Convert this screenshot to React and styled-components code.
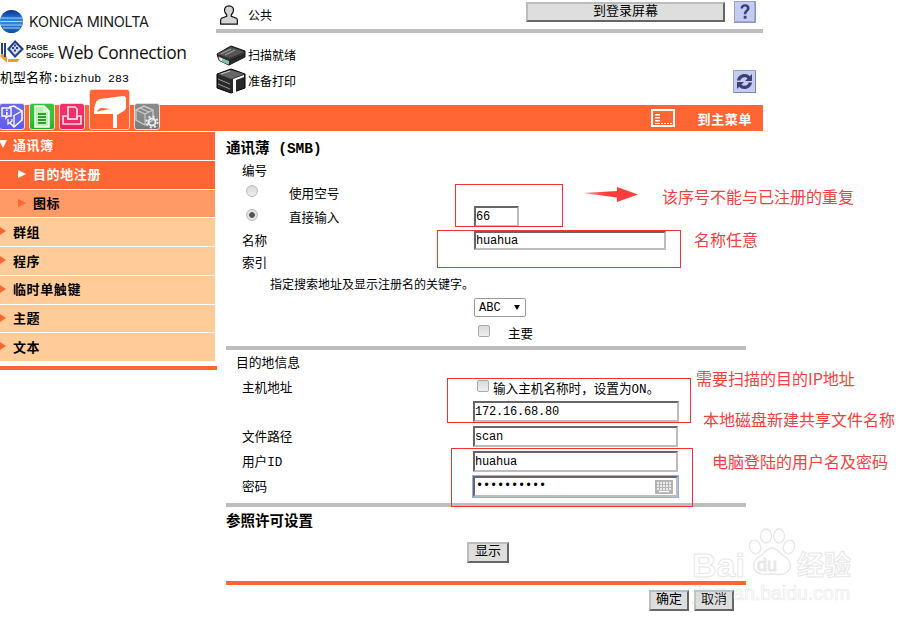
import React from "react";
import styled, { createGlobalStyle, css } from "styled-components";

const FONT = `"Liberation Mono", "Noto Sans CJK SC", monospace`;
const ORANGE = "#ff6633";

const Global = createGlobalStyle`
  html, body { margin: 0; padding: 0; background: #fff; }
  body { font-family: ${FONT}; font-size: 12px; color: #000; }
`;

const Page = styled.div`
  position: relative;
  width: 902px;
  height: 624px;
  overflow: hidden;
  background: #fff;
`;
const Header = styled.header`
  display: flex;
  width: 763px;
  height: 105px;
`;
const Brand = styled.div`
  width: 216px;
  flex: none;
  display: flex;
  flex-direction: column;
`;
const KonicaRow = styled.div`
  display: flex;
  align-items: center;
  height: 32px;
  margin-top: 5px;
  gap: 6px;
`;
const KonicaName = styled.span`
  font: 400 14.4px "Inter", "Liberation Sans", sans-serif;
  letter-spacing: -0.2px;
  color: #1a1a1a;
`;
const ScopeRow = styled.div`
  display: flex;
  align-items: center;
  height: 26px;
  margin-top: 2px;
`;
const ScopeWords = styled.span`
  font: 700 8px/8px "Liberation Sans", sans-serif;
  color: #222;
  width: 28px;
  margin: 0 4px 0 2px;
  flex: none;
`;
const WebConn = styled.span`
  font: 400 17.4px "Open Sans", "Liberation Sans", sans-serif;
  letter-spacing: -0.35px;
  color: #111;
  white-space: nowrap;
`;
const ModelName = styled.div`
  font: 13px/16px ${FONT};
  margin-top: 6px;
`;
const ModelCode = styled.span`
  font-size: 11.5px;
`;
const TopArea = styled.div`
  width: 547px;
  display: flex;
  flex-direction: column;
`;
const UserRow = styled.div`
  display: flex;
  align-items: center;
  height: 29px;
  padding-left: 4px;
  gap: 10px;
  font-size: 12px;
`;
const LoginBtn = styled.div`
  margin-left: auto;
  width: 199px;
  height: 20px;
  box-sizing: border-box;
  margin-top: -5px;
  margin-right: -1px;
  background: #dedede;
  border: 2px solid;
  border-color: #bdbdbd #666 #666 #bdbdbd;
  text-align: center;
  font-size: 13px;
  line-height: 15px;
`;
const HelpBox = styled.div`
  width: 22px;
  height: 22px;
  margin-right: 7px;
  margin-top: -6px;
  flex: none;
`;
const GrayRule = styled.div`
  height: 4px;
  background: #bdbdbd;
`;
const StatusRow = styled.div`
  display: flex;
  align-items: center;
  gap: 2px;
  height: 26px;
  font-size: 12px;
`;
const StatusList = styled.div`
  margin-top: 9px;
`;
const RefreshBox = styled.div`
  position: absolute;
  left: 733px;
  top: 70px;
  width: 23px;
  height: 23px;
`;
const OrangeBar = styled.div`
  position: relative;
  width: 763px;
  height: 26px;
  background: ${ORANGE};
  display: flex;
  align-items: center;
  justify-content: flex-end;
  padding-right: 11px;
  box-sizing: border-box;
  gap: 23px;
  color: #fff;
  font-weight: 700;
  font-size: 13px;
  letter-spacing: 0.6px;
`;
const TabStrip = styled.nav`
  position: absolute;
  left: -1px;
  bottom: 1px;
  display: flex;
  align-items: flex-end;
  gap: 4px;
`;
const Tab = styled.div`
  width: ${(p) => (p.$big ? 41 : 26)}px;
  height: ${(p) => (p.$big ? 41 : 27)}px;
  box-sizing: border-box;
  border-radius: 3px;
  background: linear-gradient(${(p) => p.$bg} 0 55%, ${(p) => p.$bg2 || p.$bg} 100%);
  border: 1px solid ${(p) => (p.$big ? "#f5d5c8" : "#ddd")};
  overflow: hidden;
  flex: none;
  svg { display: block; }
`;
const Body = styled.div`
  display: flex;
  width: 763px;
`;
const Side = styled.aside`
  width: 217px;
  flex: none;
  padding-top: 1px;
`;
const Menu = styled.div`
  width: 215px;
`;
const MenuItem = styled.div`
  height: ${(p) => p.$h || 28}px;
  margin-bottom: 1px;
  box-sizing: border-box;
  padding-bottom: ${(p) => p.$pb || 2}px;
  display: flex;
  align-items: center;
  background: ${(p) => p.$bg};
  color: ${(p) => (p.$light ? "#fff" : "#000")};
  font-weight: 700;
  font-size: 13px;
  letter-spacing: 0.6px;
  padding-left: ${(p) => (p.$sub ? 18 : 0)}px;
  &:last-child { margin-bottom: 0; }
`;
const Tri = styled.span`
  width: 0;
  height: 0;
  flex: none;
  margin-right: ${(p) => (p.$down ? 6 : 7)}px;
  ${(p) =>
    p.$down
      ? css`
          border-left: 4px solid transparent;
          border-right: 4px solid transparent;
          border-top: 8px solid #fff;
          margin-left: -1px;
        `
      : css`
          border-top: 4px solid transparent;
          border-bottom: 4px solid transparent;
          border-left: ${p.$sub ? 8 : 6}px solid ${p.$c};
        `}
`;
const SideRule = styled.div`
  height: 4px;
  background: ${ORANGE};
  margin-top: 5px;
`;
const Main = styled.main`
  width: 520px;
  margin-left: 9px;
  padding-top: 8px;
`;
const H2 = styled.div`
  font-weight: 700;
  font-size: 14.5px;
  height: ${(p) => p.$h}px;
  line-height: ${(p) => p.$h}px;
`;
const Row = styled.div`
  display: grid;
  grid-template-columns: 248px 1fr;
  align-items: center;
  height: ${(p) => p.$h}px;
  margin-top: ${(p) => p.$mt || 0}px;
`;
const Label = styled.div`
  padding-left: 16px;
  margin-top: -2px;
  font-size: 12.6px;
  white-space: nowrap;
`;
const RadioLabel = styled.label`
  display: flex;
  align-items: center;
  padding-left: 20px;
  font-size: 12.6px;
`;
const Radio = styled.span`
  width: 12px;
  height: 12px;
  box-sizing: border-box;
  border-radius: 50%;
  background: ${(p) =>
    p.$on
      ? "radial-gradient(circle, #555 0 2.5px, #e4e4e4 3.2px)"
      : "linear-gradient(#d8d8d8, #eee)"};
  border: 1px solid #bbb;
  margin-right: 31px;
  margin-top: -3px;
  flex: none;
`;
const TextBox = styled.div`
  width: ${(p) => p.$w}px;
  height: ${(p) => p.$ht || 21}px;
  margin-left: ${(p) => p.$ml || 0}px;
  box-sizing: border-box;
  border: 2px solid;
  border-color: #666 #bdbdbd #bdbdbd #666;
  font: 12px/15px ${FONT};
  letter-spacing: -0.2px;
  padding: 2px 0 0 0;
  background: #fff;
  display: flex;
  align-items: center;
  ${(p) =>
    p.$focus &&
    css`
      outline: 1px solid #8fb0e8;
      justify-content: space-between;
      padding: 0 3px 0 1px;
    `}
`;
const SelectBox = styled.div`
  width: 52px;
  height: 19px;
  box-sizing: border-box;
  border: 1px solid #999;
  border-radius: 2px;
  display: flex;
  align-items: center;
  justify-content: space-between;
  padding: 0 4px;
  font-size: 12px;
`;
const Arrow = styled.span`
  width: 0;
  height: 0;
  border-left: 3px solid transparent;
  border-right: 3px solid transparent;
  border-top: 5px solid #000;
  margin-right: 1px;
`;
const CheckLine = styled.div`
  display: flex;
  align-items: center;
  padding-left: ${(p) => p.$pl}px;
  font-size: 12.6px;
  white-space: nowrap;
`;
const Check = styled.span`
  width: 12px;
  height: 12px;
  box-sizing: border-box;
  border: 1px solid #aaa;
  border-radius: 2px;
  background: linear-gradient(#d9d9d9, #f0f0f0);
  margin-right: ${(p) => p.$mr}px;
  margin-top: -3px;
  flex: none;
`;
const Hint = styled.div`
  padding-left: 44px;
  height: 23px;
  line-height: 27px;
  font-size: 12px;
`;
const Dest = styled.div`
  padding-left: 10px;
  height: 25px;
  line-height: 28px;
  font-size: 12.8px;
`;
const ColorRule = styled.div`
  height: 4px;
  background: ${(p) => p.$c};
  margin-top: ${(p) => p.$mt || 0}px;
  margin-bottom: ${(p) => p.$mb || 0}px;
`;
const Btn = styled.div`
  width: ${(p) => p.$w || 42}px;
  height: 21px;
  box-sizing: border-box;
  background: #dedede;
  border: 2px solid;
  border-color: #bdbdbd #666 #666 #bdbdbd;
  text-align: center;
  line-height: 15px;
  font-size: 13px;
`;
const Footer = styled.div`
  display: flex;
  gap: 5px;
  padding-left: 423px;
`;
const BtnRow = styled.div`
  padding-left: 241px;
  margin-top: 5px;
`;
const Mark = styled.div`
  position: absolute;
  left: ${(p) => p.$x}px;
  top: ${(p) => p.$y}px;
  width: ${(p) => p.$w}px;
  height: ${(p) => p.$h}px;
  box-sizing: border-box;
  border: 1px solid #ee3333;
`;
const Note = styled.div`
  position: absolute;
  left: ${(p) => p.$x}px;
  top: ${(p) => p.$y}px;
  color: #f54040;
  font: 400 16px/22px "Noto Sans CJK SC", sans-serif;
  white-space: nowrap;
`;
const RedArrow = styled.svg`
  position: absolute;
  left: 583px;
  top: 186px;
`;
const Watermark = styled.div`
  position: absolute;
  left: 692px;
  top: 526px;
  width: 200px;
  height: 80px;
  pointer-events: none;
  opacity: 0.6;
  color: rgba(255, 255, 255, 0.5);
  -webkit-text-stroke: 1px #d8d8d8;
`;
const WmBai = styled.span`
  position: absolute;
  left: 0;
  top: 19px;
  font: 700 34px/40px "Liberation Sans", sans-serif;
`;
const WmDu = styled.span`
  position: absolute;
  left: 65px;
  top: 28px;
  font: 400 18px/22px "Liberation Sans", sans-serif;
  color: #ddd;
`;
const WmCn = styled.span`
  position: absolute;
  left: 105px;
  top: 21px;
  font: 700 27px/34px "Noto Sans CJK SC", sans-serif;
`;
const WmUrl = styled.span`
  position: absolute;
  left: 1px;
  top: 56px;
  font: 400 19.5px/22px "Liberation Sans", sans-serif;
  color: transparent;
  -webkit-text-stroke: 0.6px #d8d8d8;
  white-space: nowrap;
`;
const PawMark = styled.svg`
  position: absolute;
  left: 55px;
  top: 2px;
`;

const Globe = () => (
  <svg width="23" height="23" viewBox="0 0 23 23">
    <defs>
      <linearGradient id="g" x1="0" y1="0" x2="0" y2="1">
        <stop offset="0" stopColor="#0a2f9a" />
        <stop offset="0.5" stopColor="#2f8fe0" />
        <stop offset="1" stopColor="#0a4fb0" />
      </linearGradient>
    </defs>
    <circle cx="11.5" cy="11.5" r="11.500" fill="url(#g)" />
    <path d="M1 8h21M0.5 11.5h22M1 15h21M3 18h17" stroke="#cfe6fb" strokeWidth="1" opacity=".8" />
  </svg>
);
const ScopeLogo = () => (
  <svg width="24" height="26" viewBox="0 0 24 26">
    <path d="M0 17 7 24 7 18 2 14z" fill="#f29a2e" />
    <path d="M7 10 15 1 24 10 15 19z" fill="#24408f" />
    <path d="M10 10 15 4 21 10 15 16z" fill="#d5dbee" />
    <path d="M12 8h2v2h-2zM16 8h2v2h-2zM14 10.500h2v2h-2zM14 5.500h2v2h-2z" fill="#24408f" />
    <path d="M2 4v11M5 4v14" stroke="#24408f" strokeWidth="2" />
    <path d="M8 20h12l-3 3H8z" fill="#f29a2e" />
  </svg>
);
const UserIcon = () => (
  <svg width="18" height="20" viewBox="0 0 18 20">
    <path
      d="M9 .8c-3 0-4.500 2-4.500 4.500 0 2 1 3.500 2.200 4.400v1.600L1.500 13.200c-.6.400-.8 1-.8 1.600v4.300h16.600v-4.300c0-.6-.2-1.200-.8-1.600L11.300 11.300V9.700c1.200-.9 2.200-2.400 2.200-4.400C13.500 2.800 12 .8 9 .8z"
      fill="#d4d4d4"
      stroke="#111"
      strokeWidth="1.200"
    />
  </svg>
);
const HelpIcon = () => (
  <svg width="22" height="22" viewBox="0 0 22 22">
    <rect x=".5" y=".5" width="21" height="21" fill="#c4cdf0" stroke="#9aa2cc" />
    <path d="M1 21 21 21 21 1" fill="none" stroke="#7f86ad" />
    <path
      d="M6.500 7.500C6.800 4.500 8.500 3.300 11 3.300c2.800 0 4.600 1.500 4.600 3.900 0 3-3.300 3.300-3.300 6H9.800c0-3.600 3-4.200 3-6 0-1-.7-1.700-1.800-1.700-1.200 0-1.800.8-2 2z"
      fill="#3d3f78"
    />
    <rect x="9.700" y="14.800" width="2.800" height="2.900" fill="#3d3f78" />
  </svg>
);
const RefreshIcon = () => (
  <svg width="23" height="23" viewBox="0 0 23 23">
    <rect x=".5" y=".5" width="22" height="22" fill="#c4cdf0" stroke="#9aa2cc" />
    <path d="M1 22.500 22.500 22.500 22.500 1" fill="none" stroke="#7f86ad" />
    <path d="M4 10.500C4.500 6.500 8 4 11.500 4c2.300 0 4 .8 5.300 2.200L19 4v7h-7l2.500-2.500c-.8-.8-1.800-1.300-3-1.300-2 0-3.800 1.300-4.200 3.300z" fill="#3d3f78" />
    <path d="M19 12.500c-.5 4-4 6.500-7.500 6.500-2.300 0-4-.8-5.300-2.200L4 19v-7h7l-2.500 2.500c.8.8 1.800 1.300 3 1.300 2 0 3.800-1.300 4.200-3.300z" fill="#3d3f78" />
  </svg>
);
const ScannerIcon = () => (
  <svg width="30" height="21" viewBox="0 0 30 21">
    <path d="M1 9 15 1l14 5v6L13 20 3 15z" fill="#333" stroke="#111" />
    <path d="M1 9l14-7 13 5-14 6z" fill="#555" />
    <path d="M5 9l10-5M9 10l10-5" stroke="#aaa" strokeWidth="1" />
    <path d="M2 11 13 16v4L3 15.500z" fill="#e8e8e8" stroke="#111" strokeWidth=".6" />
    <path d="M6 14l7 2-1 3-6-2z" fill="#79c8a4" />
    <path d="M14 15l14-6v2L14 18z" fill="#222" />
  </svg>
);
const PrinterIcon = () => (
  <svg width="30" height="26" viewBox="0 0 30 26">
    <path d="M1 6 15 1l14 5v14l-14 5-14-5z" fill="#2a2a2a" stroke="#000" />
    <path d="M2 6l13-4 13 4-13 5z" fill="#666" />
    <path d="M5 6l9-3" stroke="#ccc" />
    <path d="M2 11l12 5M2 16l12 5" stroke="#999" />
    <path d="M17 11l11-4v2L20 12v12l-3 1z" fill="#fff" />
  </svg>
);
const ListIcon = () => (
  <svg width="24" height="18" viewBox="0 0 24 18">
    <rect x="1" y="1" width="22" height="16" fill="none" stroke="#fff" strokeWidth="2" />
    <path d="M4 5h5v1.500H4zM4 8h5v1.500H4zM4 11h5v1.500H4zM4 14h5v1h-5zM10 14h2v1h-2zM13 14h2v1h-2zM16 14h2v1h-2zM19 14h2v1h-2z" fill="#fff" />
  </svg>
);
const TabInfo = () => (
  <svg width="24" height="25" viewBox="0 0 24 25">
    <path d="M9 3 14 2 22 7v9l-8 7-4-4" fill="none" stroke="#fff" strokeWidth="1.600" />
    <path d="M2 4h9v8H8l-2 2v-2H2z" fill="#6a66ee" stroke="#fff" strokeWidth="1.400" />
    <path d="M6 5.500h1.600v1.500H6zM6 8h1.600v3H6z" fill="#fff" />
    <path d="M13 12l9-5M14 12v10" stroke="#fff" strokeWidth="1.300" />
    <path d="M8 15v5l4-3v-2" fill="none" stroke="#fff" strokeWidth="1.200" />
  </svg>
);
const TabDoc = () => (
  <svg width="24" height="25" viewBox="0 0 24 25">
    <path d="M5 2h9l5 5v16H5z" fill="#b8f5b0" stroke="#fff" strokeWidth="1.500" />
    <path d="M14 2v5h5" fill="none" stroke="#fff" strokeWidth="1.200" />
    <path d="M8 10h8M8 13h8M8 16h8M8 19h8" stroke="#0b7a12" strokeWidth="1.300" />
  </svg>
);
const TabPrint = () => (
  <svg width="24" height="25" viewBox="0 0 24 25">
    <path d="M8 3h7l2 2v10H8z" fill="none" stroke="#ffd8e4" strokeWidth="1.700" />
    <path d="M3 12h5v3h9v-3h4v8H3z" fill="none" stroke="#ffd8e4" strokeWidth="1.700" />
  </svg>
);
const TabScan = () => (
  <svg width="39" height="39" viewBox="0 0 39 39">
    <path d="M4 24C4 15 6 10 10 9L33 6C35 6 36 7 36 9V17C36 20 34 21 32 22L27 25V38H23V24H4z" fill="#fff" />
    <path d="M7 22C11 20 16 20 21 19L12 18C9 18 8 20 7 22z" fill="#ff6633" />
  </svg>
);
const TabBox = () => (
  <svg width="24" height="25" viewBox="0 0 24 25">
    <path d="M1 6 9 2l9 4v10l-8 5-9-5z" fill="none" stroke="#c8c8c8" strokeWidth="1.400" />
    <path d="M1 6l9 4 8-4M10 10v11M5 4l9 4" fill="none" stroke="#c8c8c8" strokeWidth="1.200" />
    <circle cx="17" cy="18" r="3.500" fill="none" stroke="#eee" strokeWidth="2" />
    <circle cx="17" cy="18" r="5.600" fill="none" stroke="#eee" strokeWidth="1.800" strokeDasharray="2 2.400" />
  </svg>
);
const KeyboardIcon = () => (
  <svg width="18" height="14" viewBox="0 0 18 14">
    <rect width="18" height="14" fill="#b4b4b4" />
    <path d="M2 3h14M2 6h14M2 9h14" stroke="#fff" strokeWidth="1.300" strokeDasharray="2 1" />
    <path d="M4 11.500h10" stroke="#fff" strokeWidth="1.300" />
  </svg>
);
const Paw = () => (
  <PawMark width="50" height="52" viewBox="0 0 50 52">
    <g fill="#fff" stroke="#d8d8d8" strokeWidth="1.300">
      <ellipse cx="8" cy="19" rx="5.500" ry="7" transform="rotate(-20 8 19)" />
      <ellipse cx="19" cy="8" rx="5.500" ry="7" />
      <ellipse cx="32" cy="8" rx="5.500" ry="7" />
      <ellipse cx="42" cy="19" rx="5.500" ry="7" transform="rotate(20 42 19)" />
      <path d="M25 20c-5 0-7 5-12 8-5 3-7 7-6 12 2 7 10 7 18 6 7 1 16 1 18-6 1-5-1-9-6-12-5-3-7-8-12-8z" />
    </g>
  </PawMark>
);

const sideItems = [
  { t: "群组" },
  { t: "程序" },
  { t: "临时单触键", pb: 3 },
  { t: "主题", h: 27 },
  { t: "文本" },
];

const HOST_HINT = "输入主机名称时\uFF0C设置为ON。";

export default function App() {
  return (
    <Page>
      <Global />
      <Header>
        <Brand>
          <KonicaRow>
            <Globe />
            <KonicaName>KONICA MINOLTA</KonicaName>
          </KonicaRow>
          <ScopeRow>
            <ScopeLogo />
            <ScopeWords>PAGE SCOPE</ScopeWords>
            <WebConn>Web Connection</WebConn>
          </ScopeRow>
          <ModelName>
            机型名称:<ModelCode>bizhub 283</ModelCode>
          </ModelName>
        </Brand>
        <TopArea>
          <UserRow>
            <UserIcon />
            公共
            <LoginBtn>到登录屏幕</LoginBtn>
            <HelpBox>
              <HelpIcon />
            </HelpBox>
          </UserRow>
          <GrayRule />
          <StatusList>
            <StatusRow>
              <ScannerIcon />
              扫描就绪
            </StatusRow>
            <StatusRow>
              <PrinterIcon />
              准备打印
            </StatusRow>
          </StatusList>
        </TopArea>
        <RefreshBox>
          <RefreshIcon />
        </RefreshBox>
      </Header>
      <OrangeBar>
        <ListIcon />
        到主菜单
        <TabStrip>
          <Tab $bg="#6a66ee" $bg2="#5a5af5"><TabInfo /></Tab>
          <Tab $bg="#35c43a" $bg2="#22b02a"><TabDoc /></Tab>
          <Tab $bg="#f0306a" $bg2="#e8205c"><TabPrint /></Tab>
          <Tab $bg={ORANGE} $big><TabScan /></Tab>
          <Tab $bg="#8a8a8a" $bg2="#777"><TabBox /></Tab>
        </TabStrip>
      </OrangeBar>
      <Body>
        <Side>
          <Menu>
            <MenuItem $bg={ORANGE} $light $pb={4}>
              <Tri $down />
              通讯簿
            </MenuItem>
            <MenuItem $bg={ORANGE} $light $sub $pb={3}>
              <Tri $sub $c="#fff" />
              目的地注册
            </MenuItem>
            <MenuItem $bg="#ff9966" $sub $h={27}>
              <Tri $sub $c={ORANGE} />
              图标
            </MenuItem>
            {sideItems.map((s) => (
              <MenuItem key={s.t} $bg="#ffcc99" $h={s.h} $pb={s.pb}>
                <Tri $c={ORANGE} />
                {s.t}
              </MenuItem>
            ))}
          </Menu>
          <SideRule />
        </Side>
        <Main>
          <H2 $h={21}>通讯薄 (SMB)</H2>
          <Row $h={20}><Label>编号</Label></Row>
          <Row $h={24}>
            <RadioLabel><Radio />使用空号</RadioLabel>
          </Row>
          <Row $h={24}>
            <RadioLabel><Radio $on />直接输入</RadioLabel>
            <TextBox $w={45}>66</TextBox>
          </Row>
          <Row $h={22} $mt={1}>
            <Label>名称</Label>
            <TextBox $w={192} $ht={19}>huahua</TextBox>
          </Row>
          <Row $h={22}><Label>索引</Label></Row>
          <Hint>指定搜索地址及显示注册名的关键字。</Hint>
          <Row $h={23}>
            <span />
            <SelectBox>ABC<Arrow /></SelectBox>
          </Row>
          <Row $h={27}>
            <span />
            <CheckLine $pl={4}><Check $mr={18} />主要</CheckLine>
          </Row>
          <ColorRule $c="#bdbdbd" />
          <Dest>目的地信息</Dest>
          <Row $h={25}>
            <Label>主机地址</Label>
            <CheckLine $pl={3}><Check $mr={4} />{HOST_HINT}</CheckLine>
          </Row>
          <Row $h={22}>
            <span />
            <TextBox $w={206} $ml={-1}>172.16.68.80</TextBox>
          </Row>
          <Row $h={25} $mt={2}>
            <Label>文件路径</Label>
            <TextBox $w={205} $ml={-1}>scan</TextBox>
          </Row>
          <Row $h={25}>
            <Label>用户ID</Label>
            <TextBox $w={205} $ml={-1}>huahua</TextBox>
          </Row>
          <Row $h={25}>
            <Label>密码</Label>
            <TextBox $w={205} $ml={-1} $focus>
              <span>••••••••••</span>
              <KeyboardIcon />
            </TextBox>
          </Row>
          <ColorRule $c="#bdbdbd" $mt={4} />
          <H2 $h={30}>参照许可设置</H2>
          <BtnRow><Btn>显示</Btn></BtnRow>
          <ColorRule $c={ORANGE} $mt={18} $mb={5} />
          <Footer>
            <Btn $w={40}>确定</Btn>
            <Btn $w={40}>取消</Btn>
          </Footer>
        </Main>
      </Body>

      <Mark $x={455} $y={184} $w={108} $h={43} />
      <Mark $x={437} $y={230} $w={244} $h={38} />
      <Mark $x={447} $y={378} $w={244} $h={45} />
      <Mark $x={451} $y={448} $w={242} $h={59} />
      <RedArrow width="56" height="18" viewBox="0 0 56 18">
        <defs>
          <linearGradient id="ra" x1="0" x2="1" y1="0" y2="0">
            <stop offset="0" stopColor="#ff3c3c" stopOpacity=".5" />
            <stop offset=".4" stopColor="#ff3c3c" />
          </linearGradient>
        </defs>
        <path d="M0 7 34 5V1L55 8.500 34 16V11.500z" fill="url(#ra)" />
      </RedArrow>
      <Note $x={662} $y={185}>该序号不能与已注册的重复</Note>
      <Note $x={694} $y={228}>名称任意</Note>
      <Note $x={696} $y={367}>需要扫描的目的IP地址</Note>
      <Note $x={703} $y={408}>本地磁盘新建共享文件名称</Note>
      <Note $x={712} $y={450}>电脑登陆的用户名及密码</Note>
      <Watermark>
        <Paw />
        <WmBai>Bai</WmBai>
        <WmDu>du</WmDu>
        <WmCn>经验</WmCn>
        <WmUrl>jingyan.baidu.com</WmUrl>
      </Watermark>
    </Page>
  );
}
